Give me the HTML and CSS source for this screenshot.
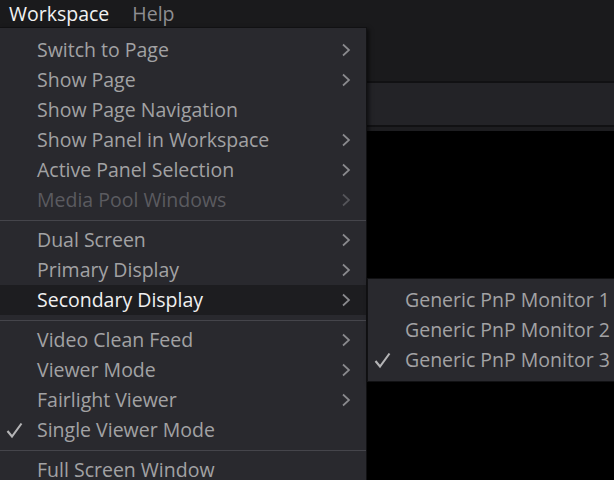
FILE: index.html
```html
<!DOCTYPE html>
<html lang="en">
<head>
  <meta charset="UTF-8">
  <title>Workspace Menu</title>
  <link rel="stylesheet" href="styles.css">
</head>
<body>

  <div class="app">
    <div class="top-area">
      <div class="menubar">
        <span class="menubar-item open">Workspace</span>
        <span class="menubar-item">Help</span>
      </div>
    </div>
    <div class="strip"></div>
    <div class="strip-gap"></div>
    <div class="viewer"></div>
  </div>

  <div class="menu" id="workspaceMenu">
    <div class="menu-item has-sub">Switch to Page</div>
    <div class="menu-item has-sub">Show Page</div>
    <div class="menu-item">Show Page Navigation</div>
    <div class="menu-item has-sub">Show Panel in Workspace</div>
    <div class="menu-item has-sub">Active Panel Selection</div>
    <div class="menu-item has-sub disabled">Media Pool Windows</div>
    <div class="separator"></div>
    <div class="menu-item has-sub">Dual Screen</div>
    <div class="menu-item has-sub">Primary Display</div>
    <div class="menu-item has-sub active">Secondary Display</div>
    <div class="separator"></div>
    <div class="menu-item has-sub">Video Clean Feed</div>
    <div class="menu-item has-sub">Viewer Mode</div>
    <div class="menu-item has-sub">Fairlight Viewer</div>
    <div class="menu-item checked">Single Viewer Mode</div>
    <div class="separator"></div>
    <div class="menu-item">Full Screen Window</div>
  </div>

  <div class="menu submenu" id="secondaryMenu">
    <div class="menu-item">Generic PnP Monitor 1</div>
    <div class="menu-item">Generic PnP Monitor 2</div>
    <div class="menu-item checked">Generic PnP Monitor 3</div>
  </div>

  <script>
    // chevrons and check marks are drawn once here instead of repeating the svg in every row
    const chevron = '<svg class="chevron" width="10" height="14" viewBox="0 0 10 14"><polyline points="2,1.5 8,7 2,12.5" fill="none" stroke="currentColor" stroke-width="1.7"/></svg>';
    const check = '<svg class="check" width="17" height="17" viewBox="0 0 17 17"><path d="M1.5 9 L6 14.5 L15.5 1.5" fill="none" stroke="currentColor" stroke-width="2.1"/></svg>';

    document.querySelectorAll(".menu-item.has-sub").forEach(item => {
      item.insertAdjacentHTML("beforeend", chevron);
    });
    document.querySelectorAll(".menu-item.checked").forEach(item => {
      item.insertAdjacentHTML("afterbegin", check);
    });
  </script>
</body>
</html>
```

FILE: styles.css
```css
body {
  margin: 0;
  background-color: #000;
  font-family: "Open Sans", "Noto Sans", sans-serif;
  overflow: hidden;
}

.app {
  display: flex;
  flex-direction: column;
  height: 480px;
}

.top-area {
  height: 81px;
  background-color: #1a1a1c;
}

.menubar {
  display: flex;
  height: 27px;
  align-items: center;
  padding-left: 9px;
  gap: 23px;
}

.menubar-item {
  font-size: 19.5px;
  color: #8e8e92;
  line-height: 27px;
}

.menubar-item.open {
  color: #f2f2f2;
}

.strip {
  height: 42px;
  background-color: #232327;
  border-top: 2px solid #111113;
  border-bottom: 2px solid #111113;
}

.strip-gap {
  height: 4px;
  background-color: #1d1d20;
}

.viewer {
  flex: 1;
  background-color: #000;
}

.menu {
  position: absolute;
  top: 27px;
  left: 0;
  width: 367px;
  height: 453px;
  padding-top: 7px;
  background-color: #29292e;
  border-top: 1px solid #111113;
  border-right: 1px solid #111113;
  box-shadow: 2px 2px 4px rgba(0, 0, 0, 0.6);
  box-sizing: border-box;
  overflow: hidden;
}

.menu-item {
  position: relative;
  height: 30px;
  line-height: 30px;
  padding-left: 37px;
  font-size: 19.5px;
  color: #a2a2a4;
  white-space: nowrap;
}

.menu-item.disabled {
  color: #5b5b60;
}

.menu-item.active {
  background-color: #1d1d20;
  color: #f0f0f0;
}

.chevron {
  position: absolute;
  right: 15px;
  top: 8px;
  color: #8a8a8e;
}

.menu-item.disabled .chevron {
  color: #55555a;
}

.check {
  position: absolute;
  left: 6px;
  top: 7px;
  color: #b4b4b6;
}

.separator {
  height: 1px;
  margin: 5px 0 4px;
  background-color: #45454b;
}

.submenu {
  top: 278px;
  left: 367px;
  width: 260px;
  height: auto;
  padding: 6px 0;
  border: 1px solid #111113;
}
```
